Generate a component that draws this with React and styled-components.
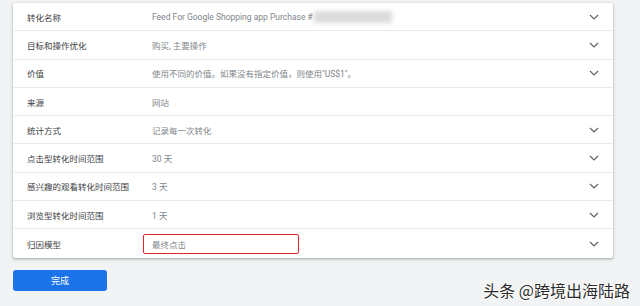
import React from 'react'
import styled, { createGlobalStyle } from 'styled-components'

const GlobalStyle = createGlobalStyle`
    body {
        margin: 0;
        background: #f1f3f4;
        font-family: Roboto, "Noto Sans CJK SC", sans-serif;
    }
`

const Page = styled.div`
    width: 640px;
    height: 306px;
    box-sizing: border-box;
    padding: 3px 27px 0 13px;
    display: flex;
    flex-direction: column;
    position: relative;
    overflow: hidden;
`

const Card = styled.div`
    background: #ffffff;
    border-radius: 2px;
    box-shadow: 0 1px 2px rgba(60, 64, 67, 0.3), 0 1px 3px 1px rgba(60, 64, 67, 0.12);
`

const Row = styled.div`
    height: 28.3px;
    box-sizing: border-box;
    display: grid;
    grid-template-columns: 125px 1fr 24px;
    align-items: center;
    padding-left: 14px;
    border-bottom: ${p => (p.last ? 'none' : '1px solid #e8eaed')};
`

const Label = styled.div`
    font-size: 8.5px;
    color: #3c4043;
`

const Value = styled.div`
    font-size: 8.5px;
    color: #80868b;
    display: flex;
    align-items: center;
    white-space: nowrap;
`

const Blur = styled.span`
    display: inline-block;
    width: 78px;
    height: 12px;
    margin-left: 1px;
    background: #dcdcdc;
    filter: blur(2px);
`

const Marked = styled.span`
    display: inline-flex;
    align-items: center;
    width: 156px;
    height: 20px;
    box-sizing: border-box;
    margin-left: -9px;
    padding-left: 8px;
    border: 1.5px solid #e3262b;
    border-radius: 2px;
`

const Chevron = styled.svg`
    width: 10px;
    height: 6px;
    justify-self: start;
`

const Button = styled.button`
    margin-top: 12px;
    width: 94px;
    height: 21px;
    border: none;
    border-radius: 3px;
    background: #1a73e8;
    color: #ffffff;
    font-family: Roboto, "Noto Sans CJK SC", sans-serif;
    font-size: 9px;
    padding: 0;
`

const Watermark = styled.div`
    position: absolute;
    right: 10px;
    bottom: 8px;
    font-family: "Noto Sans CJK SC", sans-serif;
    font-size: 16px;
    line-height: 16px;
    color: #2b2b2b;
    text-shadow: 1px 0 0 #fff, -1px 0 0 #fff, 0 1px 0 #fff, 0 -1px 0 #fff;
`

const rows = [
    { label: '转化名称', value: 'Feed For Google Shopping app Purchase #', blur: true },
    { label: '目标和操作优化', value: '购买, 主要操作' },
    { label: '价值', value: '使用不同的价值。如果没有指定价值，则使用"US$1"。' },
    { label: '来源', value: '网站', noChevron: true },
    { label: '统计方式', value: '记录每一次转化' },
    { label: '点击型转化时间范围', value: '30 天' },
    { label: '感兴趣的观看转化时间范围', value: '3 天' },
    { label: '浏览型转化时间范围', value: '1 天' },
    { label: '归因模型', value: '最终点击', marked: true },
]

function App() {
    return (
        <Page>
            <GlobalStyle />
            <Card>
                {rows.map((r, i) => (
                    <Row key={r.label} last={i === rows.length - 1}>
                        <Label>{r.label}</Label>
                        <Value>
                            {r.marked ? <Marked>{r.value}</Marked> : r.value}
                            {r.blur && <Blur />}
                        </Value>
                        {r.noChevron ? <span /> : (
                            <Chevron viewBox="0 0 10 6">
                                <path d="M1 1l4 4 4-4" fill="none" stroke="#5f6368" strokeWidth="1.2" />
                            </Chevron>
                        )}
                    </Row>
                ))}
            </Card>
            <Button>完成</Button>
            <Watermark>头条 @跨境出海陆路</Watermark>
        </Page>
    )
}

export default App
